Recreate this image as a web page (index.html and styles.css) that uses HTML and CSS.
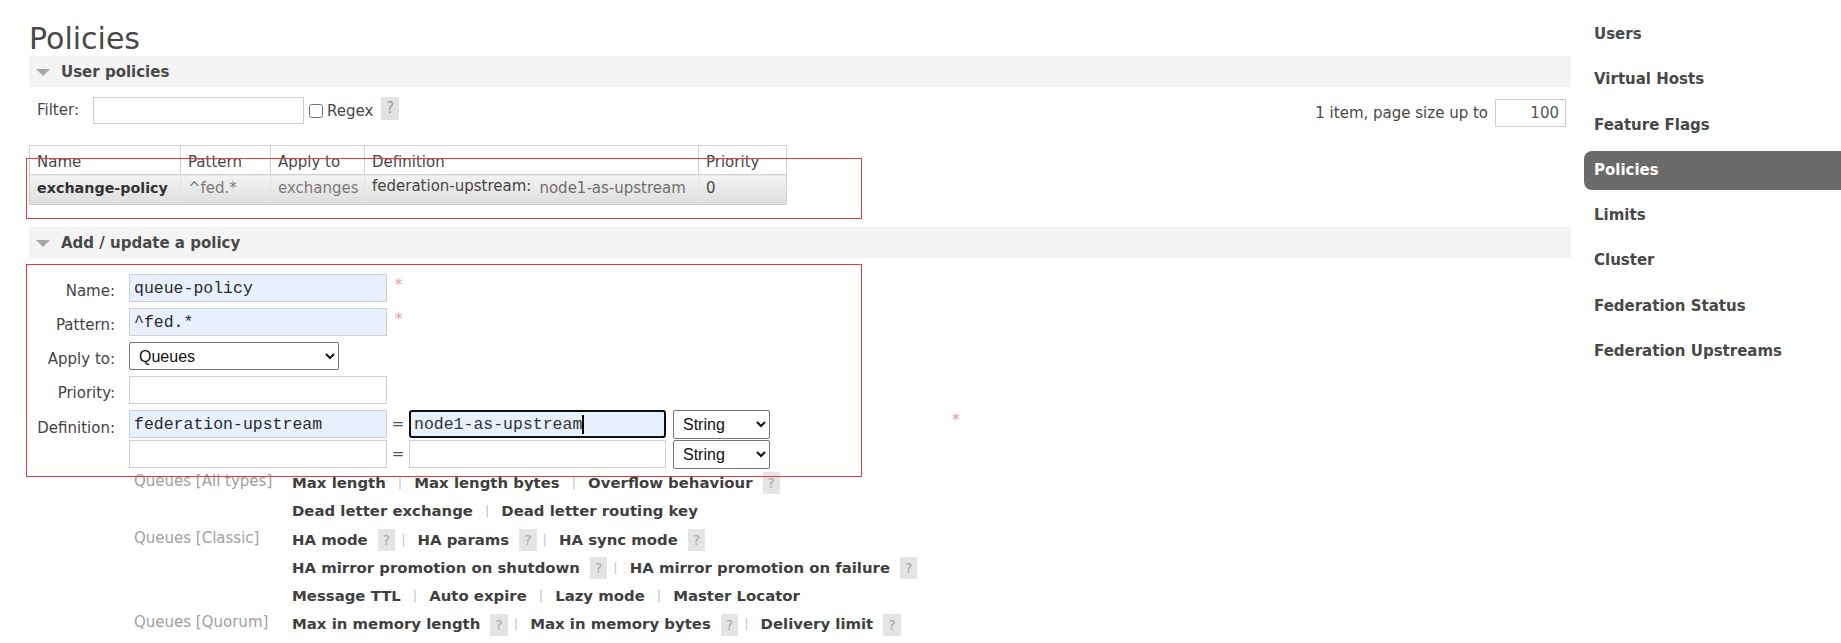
FILE: index.html
```html
<!DOCTYPE html>
<html lang="en">
<head>
<meta charset="utf-8">
<title>Policies</title>
<link rel="stylesheet" href="styles.css">
</head>
<body>
<div class="layout">
  <main class="main">
    <h1 class="title">Policies</h1>

    <section class="panel">
      <h2 class="panel-head"><span class="tri"></span>User policies</h2>
      <div class="filter-row">
        <span class="filter-label">Filter:</span>
        <input class="filter-input" type="text">
        <label class="regex"><input type="checkbox" class="chk"><span>Regex</span></label>
        <span class="help">?</span>
        <span class="spacer"></span>
        <span class="page-size">1 item, page size up to</span>
        <input class="page-input" type="text" value="100">
      </div>
      <table class="list">
        <thead>
          <tr>
            <th class="c-name">Name</th>
            <th class="c-pattern">Pattern</th>
            <th class="c-apply">Apply to</th>
            <th class="c-def">Definition</th>
            <th class="c-prio">Priority</th>
          </tr>
        </thead>
        <tbody>
          <tr>
            <td class="strong">exchange-policy</td>
            <td class="muted">^fed.*</td>
            <td class="muted">exchanges</td>
            <td><span class="def-key">federation-upstream:</span><span class="def-val">node1-as-upstream</span></td>
            <td>0</td>
          </tr>
        </tbody>
      </table>
    </section>

    <section class="panel panel-add">
      <h2 class="panel-head"><span class="tri"></span>Add / update a policy</h2>
      <form class="policy-form">
        <div class="row">
          <label class="lbl">Name:</label>
          <input class="field auto" type="text" value="queue-policy">
          <span class="req">*</span>
        </div>
        <div class="row">
          <label class="lbl">Pattern:</label>
          <input class="field auto" type="text" value="^fed.*">
          <span class="req">*</span>
        </div>
        <div class="row">
          <label class="lbl">Apply to:</label>
          <select class="sel sel-apply"><option>Queues</option></select>
        </div>
        <div class="row">
          <label class="lbl">Priority:</label>
          <input class="field" type="text">
        </div>
        <div class="row row-def">
          <label class="lbl">Definition:</label>
          <input class="field auto" type="text" value="federation-upstream">
          <span class="eq">=</span>
          <div class="field value focused">node1-as-upstream<span class="caret"></span></div>
          <select class="sel sel-type"><option>String</option></select>
          <span class="req req-far">*</span>
        </div>
        <div class="row row-def2">
          <span class="lbl"></span>
          <input class="field" type="text">
          <span class="eq">=</span>
          <input class="field value" type="text">
          <select class="sel sel-type"><option>String</option></select>
        </div>
      </form>

      <div class="help-groups">
        <div class="grp-label">Queues [All types]</div>
        <div class="grp-links">
          <div class="line"><span class="lk">Max length</span><span class="sep">|</span><span class="lk">Max length bytes</span><span class="sep">|</span><span class="lk">Overflow behaviour</span><span class="help help-sm">?</span></div>
          <div class="line"><span class="lk">Dead letter exchange</span><span class="sep">|</span><span class="lk">Dead letter routing key</span></div>
        </div>
        <div class="grp-label">Queues [Classic]</div>
        <div class="grp-links">
          <div class="line"><span class="lk">HA mode</span><span class="help help-sm">?</span><span class="sep after-help">|</span><span class="lk">HA params</span><span class="help help-sm">?</span><span class="sep after-help">|</span><span class="lk">HA sync mode</span><span class="help help-sm">?</span></div>
          <div class="line"><span class="lk">HA mirror promotion on shutdown</span><span class="help help-sm">?</span><span class="sep after-help">|</span><span class="lk">HA mirror promotion on failure</span><span class="help help-sm">?</span></div>
          <div class="line"><span class="lk">Message TTL</span><span class="sep">|</span><span class="lk">Auto expire</span><span class="sep">|</span><span class="lk">Lazy mode</span><span class="sep">|</span><span class="lk">Master Locator</span></div>
        </div>
        <div class="grp-label">Queues [Quorum]</div>
        <div class="grp-links">
          <div class="line"><span class="lk">Max in memory length</span><span class="help help-sm">?</span><span class="sep after-help">|</span><span class="lk">Max in memory bytes</span><span class="help help-sm">?</span><span class="sep after-help">|</span><span class="lk">Delivery limit</span><span class="help help-sm">?</span></div>
        </div>
      </div>
    </section>

    <div class="annot annot-1"></div>
    <div class="annot annot-2"></div>
  </main>

  <nav class="menu">
    <ul>
      <li><a>Users</a></li>
      <li><a>Virtual Hosts</a></li>
      <li><a>Feature Flags</a></li>
      <li><a class="active">Policies</a></li>
      <li><a>Limits</a></li>
      <li><a>Cluster</a></li>
      <li><a>Federation Status</a></li>
      <li><a>Federation Upstreams</a></li>
    </ul>
  </nav>
</div>
</body>
</html>
```

FILE: styles.css
```css
* { box-sizing: border-box; }

html, body {
  margin: 0;
  padding: 0;
  background: #fff;
  overflow: hidden;
}

body {
  font-family: "DejaVu Sans", Verdana, sans-serif;
  font-size: 15px;
  color: #484848;
}

.layout {
  display: flex;
  align-items: flex-start;
}

.main {
  position: relative;
  flex: none;
  width: 1542px;
  margin-left: 29px;
}

.title {
  margin: 22px 0 0;
  font-size: 30px;
  line-height: 34px;
  font-weight: normal;
  color: #484848;
}

.panel-head {
  display: flex;
  align-items: center;
  height: 31px;
  margin: 0;
  padding-left: 7px;
  background: #f4f4f4;
  font-size: 15px;
  line-height: 18px;
  font-weight: bold;
  color: #484848;
}

.tri {
  width: 0;
  height: 0;
  border-left: 7px solid transparent;
  border-right: 7px solid transparent;
  border-top: 7px solid #a6a6a6;
  margin-right: 11px;
  margin-top: 2px;
}

/* filter row */
.filter-row {
  display: flex;
  align-items: flex-start;
  height: 30px;
  margin-top: 10px;
  padding-left: 8px;
}

.filter-label {
  line-height: 27px;
  margin-right: 14px;
}

.filter-input {
  width: 211px;
  height: 27px;
  border: 1px solid #cfcfcf;
  margin: 0;
  padding: 0 4px;
}

.regex {
  display: flex;
  align-items: center;
  height: 27px;
  margin-left: 4px;
}

.chk {
  width: 14px;
  height: 14px;
  margin: 1px 4px 0 1px;
}

.help {
  display: inline-block;
  height: 23px;
  line-height: 23px;
  padding: 0 5px;
  margin-left: 8px;
  background: #e2e2e2;
  color: #9a9a9a;
  font-size: 15px;
}

.spacer { flex: 1; }

.page-size {
  line-height: 28px;
  margin-top: 2px;
  margin-right: 7px;
}

.page-input {
  width: 71px;
  height: 28px;
  margin: 2px 5px 0 0;
  border: 1px solid #cfcfcf;
  padding: 0 6px;
  text-align: right;
  font-family: "DejaVu Sans", sans-serif;
  font-size: 15px;
  color: #555;
}

/* table */
.list {
  margin-top: 18px;
  border-collapse: collapse;
  table-layout: fixed;
  width: 757px;
  font-size: 15px;
}

.list th {
  height: 29px;
  padding: 0 7px 3px;
  vertical-align: bottom;
  text-align: left;
  font-weight: normal;
  line-height: 18px;
  color: #484848;
  border: 1px solid #d2d2d2;
  background: #fff;
}

.c-name { width: 151px; }
.c-pattern { width: 90px; }
.c-apply { width: 94px; }
.c-def { width: 334px; }
.c-prio { width: 88px; }

.list td {
  height: 30px;
  padding: 0 6px 3px 7px;
  line-height: 18px;
  white-space: nowrap;
  overflow: hidden;
  background: linear-gradient(#f3f3f3, #dedede);
  border-left: 1px solid #e4e4e4;
  border-bottom: 1px solid #cfcfcf;
  color: #484848;
}

.list td:first-child { border-left: 1px solid #d2d2d2; }
.list td:last-child { border-right: 1px solid #d2d2d2; }

.list .strong { font-weight: bold; font-size: 14.3px; color: #333; }
.list .muted { color: #7a7a7a; }

.def-key {
  display: inline-block;
  position: relative;
  top: -2px;
  color: #444;
  margin-right: 8px;
}

.def-val { color: #6e6e6e; }

/* add policy */
.panel-add { margin-top: 22px; }

.policy-form {
  margin-top: 16px;
}

.row {
  display: flex;
  align-items: flex-end;
  height: 28px;
  margin-bottom: 6px;
}

.row-def { margin-bottom: 1px; height: 29px; }
.row-def2 { height: 29px; margin-bottom: 0; }

.lbl {
  flex: none;
  width: 86px;
  margin-right: 14px;
  padding-bottom: 2px;
  text-align: right;
  line-height: 18px;
  color: #444;
}

.field {
  flex: none;
  width: 258px;
  height: 28px;
  margin: 0;
  padding: 0 4px;
  border: 1px solid #d0d0d0;
  background: #fff;
  font-family: "Liberation Mono", "Courier New", monospace;
  font-size: 16.5px;
  color: #2a2a2a;
}

.field.auto { background: #e8f0fe; }

.row-def .field, .row-def2 .field { align-self: flex-start; }

.req {
  align-self: flex-start;
  margin-left: 8px;
  line-height: 22px;
  color: #f09a9a;
  font-size: 15px;
}

.req-far { margin-left: 182px; margin-top: -1px; }

.eq {
  flex: none;
  width: 22px;
  align-self: flex-start;
  line-height: 28px;
  text-align: center;
  color: #555;
}

.value {
  width: 257px;
}

.focused {
  display: flex;
  align-items: center;
  padding: 0 3px;
  border: 2px solid #111;
  border-radius: 3px;
  background: #e8f0fe;
  color: #333;
}

.caret {
  display: inline-block;
  width: 2px;
  height: 19px;
  background: #000;
}

.sel {
  flex: none;
  margin: 0;
  height: 28px;
  border: 1px solid #767676;
  border-radius: 2px;
  background: #fff;
  font-family: "Liberation Sans", Arial, sans-serif;
  font-size: 16px;
  color: #111;
  padding-left: 5px;
}

.sel-apply { width: 210px; }

.sel-type {
  width: 97px;
  height: 29px;
  margin-left: 7px;
  align-self: flex-start;
}

/* help link groups */
.help-groups {
  display: grid;
  grid-template-columns: 158px auto;
  margin-left: 105px;
  line-height: 28.3px;
}

.grp-label {
  color: #a0a0a0;
  font-size: 15px;
  position: relative;
  top: -2px;
}

.line {
  display: flex;
  align-items: center;
  height: 28.3px;
  white-space: nowrap;
}

.lk {
  font-weight: bold;
  font-size: 14.9px;
  color: #3f3f3f;
}

.sep {
  margin: 0 12px;
  color: #c4c4c4;
  font-size: 13px;
}

.sep.after-help { margin-left: 6px; }

.help-sm {
  height: 22px;
  line-height: 22px;
  margin-left: 10px;
  padding: 0 5px;
  font-size: 14px;
  color: #a8a8a8;
  background: #e4e4e4;
}

/* annotation boxes */
.annot {
  position: absolute;
  left: -3px;
  width: 836px;
  border: 1px solid #e63b3b;
  pointer-events: none;
}

.annot-1 { top: 158px; height: 61px; }
.annot-2 { top: 264px; height: 213px; }

/* sidebar menu */
.menu {
  flex: 1;
  margin-left: 13px;
}

.menu ul {
  list-style: none;
  margin: 0;
  padding: 15px 0 0;
}

.menu li a {
  display: block;
  height: 39px;
  line-height: 39px;
  margin-bottom: 6.28px;
  padding-left: 10px;
  border-radius: 8px 0 0 8px;
  font-weight: bold;
  font-size: 15px;
  color: #484848;
  white-space: nowrap;
}

.menu li a.active {
  background: #6a6a6a;
  color: #fff;
}
```
